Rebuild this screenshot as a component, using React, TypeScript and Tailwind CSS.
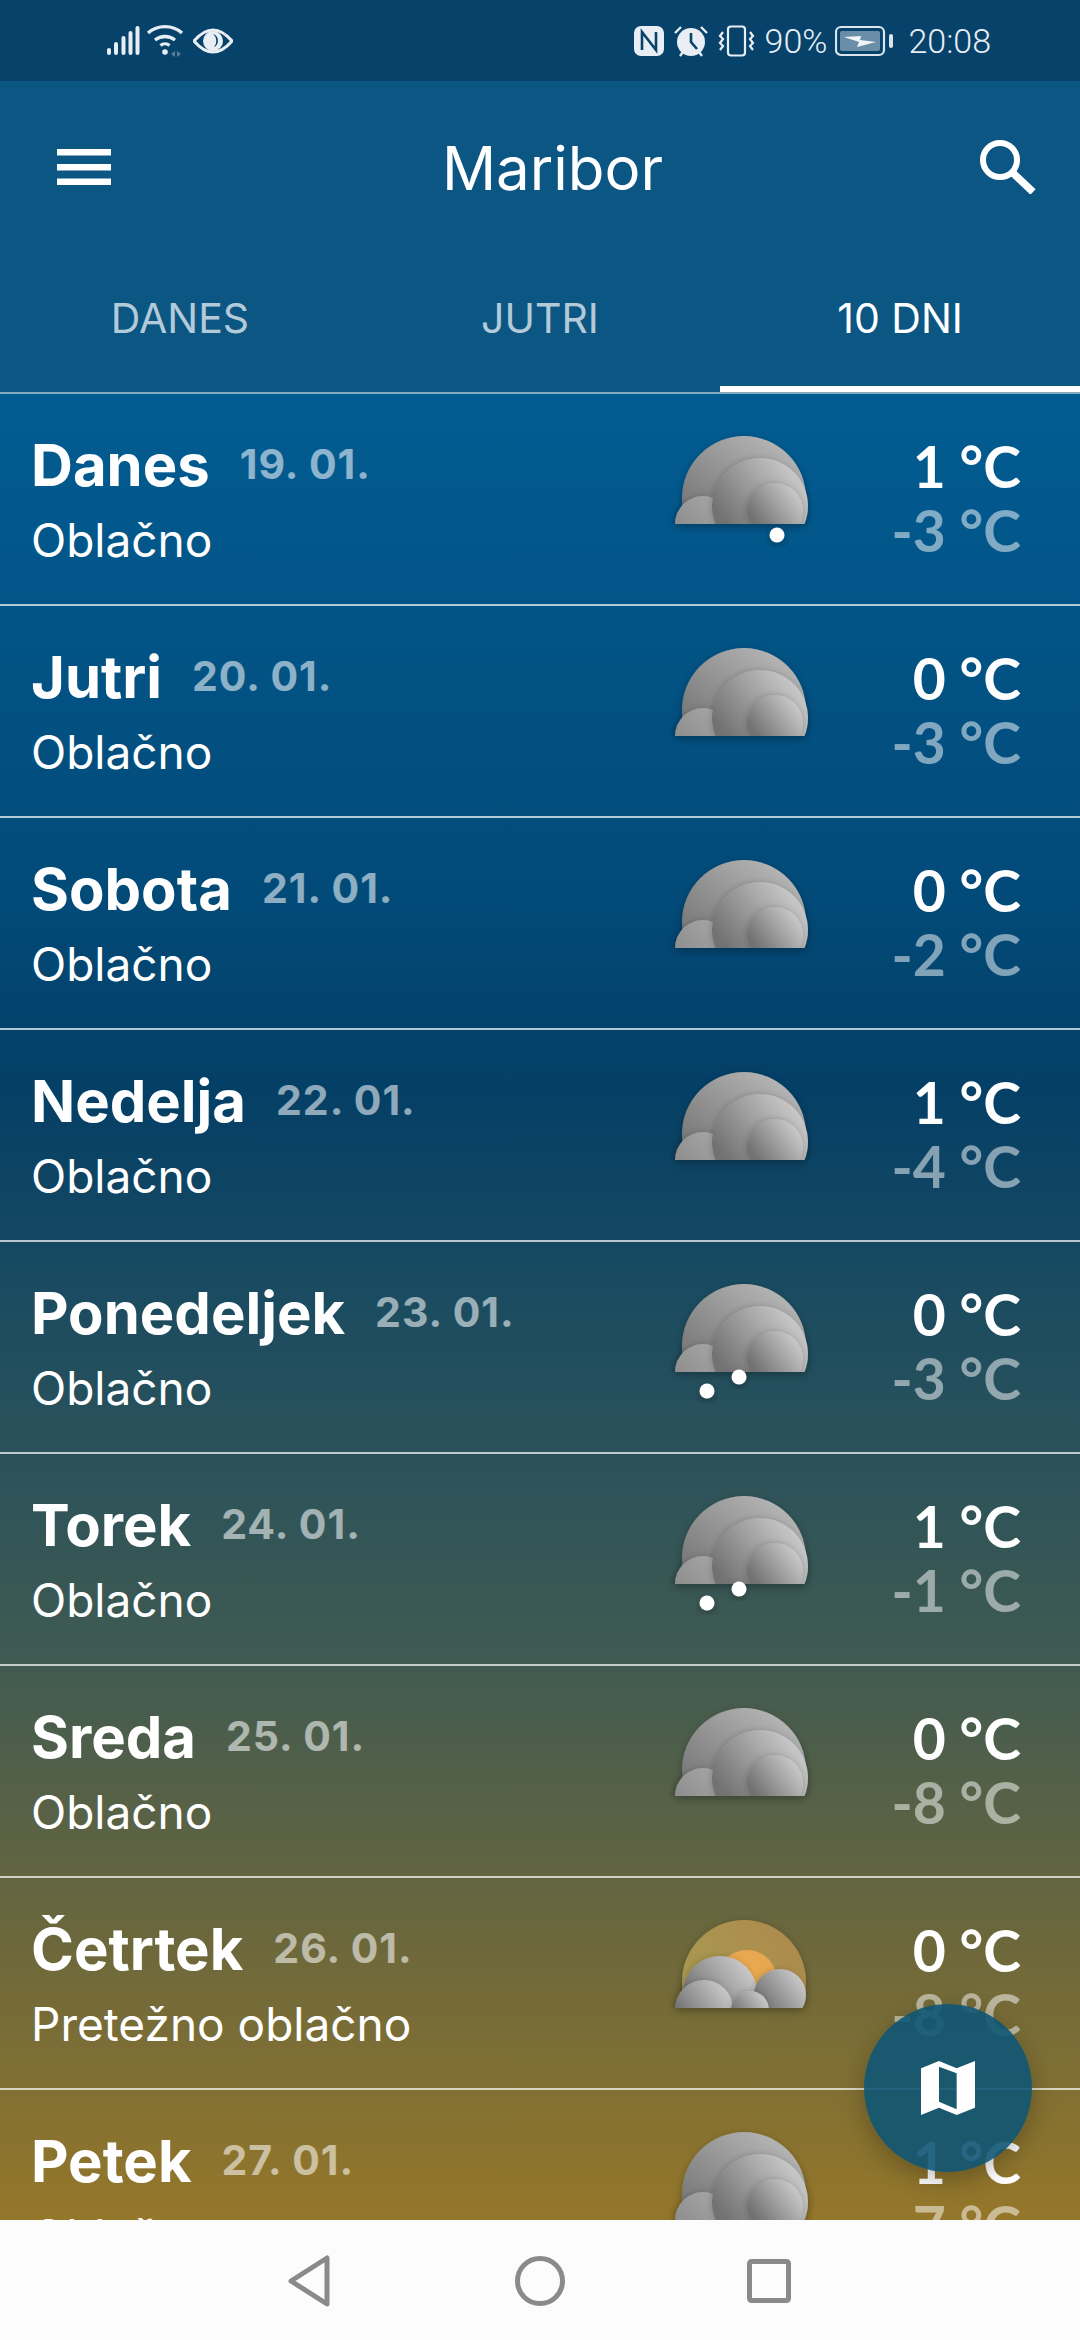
const days = [
  { name: 'Danes', date: '19. 01.', desc: 'Oblačno', hi: '1 °C', lo: '-3 °C', icon: 'one' },
  { name: 'Jutri', date: '20. 01.', desc: 'Oblačno', hi: '0 °C', lo: '-3 °C', icon: 'cloud' },
  { name: 'Sobota', date: '21. 01.', desc: 'Oblačno', hi: '0 °C', lo: '-2 °C', icon: 'cloud' },
  { name: 'Nedelja', date: '22. 01.', desc: 'Oblačno', hi: '1 °C', lo: '-4 °C', icon: 'cloud' },
  { name: 'Ponedeljek', date: '23. 01.', desc: 'Oblačno', hi: '0 °C', lo: '-3 °C', icon: 'two' },
  { name: 'Torek', date: '24. 01.', desc: 'Oblačno', hi: '1 °C', lo: '-1 °C', icon: 'two' },
  { name: 'Sreda', date: '25. 01.', desc: 'Oblačno', hi: '0 °C', lo: '-8 °C', icon: 'cloud' },
  { name: 'Četrtek', date: '26. 01.', desc: 'Pretežno oblačno', hi: '0 °C', lo: '-8 °C', icon: 'sun' },
  { name: 'Petek', date: '27. 01.', desc: 'Oblačno', hi: '1 °C', lo: '-7 °C', icon: 'cloud' },
];

function IconDefs() {
  return (
    <svg width="0" height="0" className="absolute">
      <defs>
        <linearGradient id="gBig" x1="0.1" y1="0.7" x2="0.7" y2="0">
          <stop offset="0" stopColor="#757575" />
          <stop offset="1" stopColor="#b4b4b4" />
        </linearGradient>
        <linearGradient id="gMid" x1="0.1" y1="0.62" x2="0.8" y2="0.1">
          <stop offset="0" stopColor="#727272" />
          <stop offset="1" stopColor="#c6c6c6" />
        </linearGradient>
        <linearGradient id="gFoot" x1="0.1" y1="0.7" x2="0.8" y2="0.1">
          <stop offset="0" stopColor="#8c8c8c" />
          <stop offset="1" stopColor="#a6a6a6" />
        </linearGradient>
        <linearGradient id="gHalo" x1="0" y1="0.6" x2="0.8" y2="0.1">
          <stop offset="0" stopColor="#a89a50" />
          <stop offset="1" stopColor="#ad8c4e" />
        </linearGradient>
        <clipPath id="cutBase">
          <rect x="0" y="0" width="150" height="129" />
        </clipPath>
        <filter id="soft" x="-30%" y="-30%" width="160%" height="160%">
          <feDropShadow dx="-1" dy="0" stdDeviation="3" floodColor="#000000" floodOpacity="0.18" />
        </filter>
        <filter id="under" x="-20%" y="-20%" width="140%" height="150%">
          <feDropShadow dx="0" dy="3" stdDeviation="4" floodColor="#000000" floodOpacity="0.3" />
        </filter>
      </defs>
    </svg>
  );
}

function WeatherIcon({ kind }: { kind: string }) {
  return (
    <svg width="150" height="170" viewBox="0 0 150 170" className="mt-[1px]">
      {kind === 'sun' ? (
        <g filter="url(#under)">
          <g clipPath="url(#cutBase)">
            <circle cx="79" cy="103" r="62" fill="url(#gHalo)" />
            <circle cx="82" cy="101" r="30" fill="#e8a850" />
            <circle cx="55" cy="114" r="37" fill="url(#gMid)" filter="url(#soft)" />
            <circle cx="115" cy="116" r="26" fill="url(#gMid)" filter="url(#soft)" />
            <circle cx="39" cy="130" r="29" fill="url(#gMid)" filter="url(#soft)" />
            <circle cx="85" cy="131" r="19" fill="url(#gMid)" filter="url(#soft)" />
          </g>
        </g>
      ) : (
        <g filter="url(#under)">
          <g clipPath="url(#cutBase)">
            <circle cx="79" cy="103" r="62" fill="url(#gBig)" />
            <circle cx="38" cy="129" r="28" fill="url(#gFoot)" filter="url(#soft)" />
            <circle cx="95" cy="111" r="48" fill="url(#gMid)" filter="url(#soft)" />
            <circle cx="110" cy="116" r="28" fill="url(#gMid)" filter="url(#soft)" />
          </g>
        </g>
      )}
      {kind === 'one' && <circle cx="112" cy="140" r="7.5" fill="#ffffff" filter="url(#under)" />}
      {kind === 'two' && (
        <>
          <circle cx="74" cy="134" r="7.5" fill="#ffffff" filter="url(#under)" />
          <circle cx="42" cy="148" r="7.5" fill="#ffffff" filter="url(#under)" />
        </>
      )}
    </svg>
  );
}

function StatusBar() {
  return (
    <div className="h-[81px] shrink-0 bg-[#07426a] flex items-center text-[#e8eef3] font-['Roboto',sans-serif] font-light text-[34px]">
      <div className="ml-[106px] flex items-center">
        {/* signal */}
        <svg width="34" height="32" viewBox="0 0 34 32" fill="#e8eef3">
          <rect x="1" y="23" width="4" height="7" rx="2" />
          <rect x="8" y="17" width="4" height="13" rx="2" />
          <rect x="15.5" y="11" width="4" height="19" rx="2" />
          <rect x="22.5" y="6" width="4" height="24" rx="2" />
          <rect x="29.5" y="1" width="4" height="29" rx="2" />
        </svg>
        {/* wifi */}
        <svg width="40" height="34" viewBox="0 0 40 34" fill="none" stroke="#e8eef3" strokeWidth="3.4" className="ml-[6px]">
          <path d="M2 9 A26 26 0 0 1 36 9" />
          <path d="M9 16 A16 16 0 0 1 29 16" />
          <circle cx="19" cy="28" r="2.8" fill="#e8eef3" stroke="none" />
          <path d="M14.5 21.5 A7 7 0 0 1 23.5 21.5" />
          <path d="M29 27 L25 30 L29 33 Z M31 27 L35 30 L31 33 Z" fill="#5a7f98" stroke="none" />
        </svg>
        {/* eye */}
        <svg width="40" height="30" viewBox="0 0 40 30" className="ml-[7px]">
          <path d="M1 15 Q20 -7 39 15 Q20 37 1 15 Z" fill="none" stroke="#e8eef3" strokeWidth="3" />
          <circle cx="20" cy="15" r="10" fill="#e8eef3" />
          <path d="M20 8 A7 7 0 0 1 21 21 A9 9 0 0 0 20 8 Z" fill="#07426a" />
        </svg>
      </div>
      <div className="ml-auto mr-[89px] flex items-center">
        {/* nfc */}
        <svg width="30" height="32" viewBox="0 0 30 32">
          <rect x="0" y="1" width="30" height="30" rx="7" fill="#e8eef3" />
          <path d="M8 25 V7 L22 25 V7" fill="none" stroke="#07426a" strokeWidth="2.6" />
        </svg>
        {/* alarm */}
        <svg width="34" height="34" viewBox="0 0 34 34" className="ml-[10px]">
          <circle cx="17" cy="18" r="14" fill="#e8eef3" />
          <path d="M17 9 V18 L23 25" fill="none" stroke="#07426a" strokeWidth="2.6" />
          <path d="M1 9 L7 3 M33 9 L27 3 M6 32 L9 28 M28 32 L25 28" stroke="#e8eef3" strokeWidth="2.4" />
        </svg>
        {/* vibrate */}
        <svg width="38" height="32" viewBox="0 0 38 32" fill="none" stroke="#e8eef3" strokeWidth="2.2" className="ml-[10px]">
          <rect x="10" y="1.5" width="17" height="29" rx="3" />
          <path d="M5 7 L2 11 L5 14 L2 18 L5 21 L2 25" />
          <path d="M32 7 L35 11 L32 14 L35 18 L32 21 L35 25" />
        </svg>
        <span className="ml-[9px] leading-none">90%</span>
        {/* battery */}
        <svg width="60" height="32" viewBox="0 0 60 32" className="ml-[8px]">
          <rect x="1" y="2" width="48" height="28" rx="5" fill="none" stroke="#dbe5ec" strokeWidth="2.2" />
          <rect x="5" y="6" width="40" height="20" rx="2" fill="#6a8ea8" />
          <path d="M9 12 L26 11 L25 15 L41 17 L22 22 L24 17 Z" fill="#f2f5f7" />
          <rect x="54" y="9" width="4" height="14" rx="2" fill="#dbe5ec" />
        </svg>
        <span className="ml-[13px] leading-none">20:08</span>
      </div>
    </div>
  );
}

function AppBar() {
  return (
    <div className="h-[313px] shrink-0 bg-[#0c5683] flex flex-col text-white font-['Inter',sans-serif] border-b-2 border-white/50">
      <div className="h-[172px] shrink-0 flex items-center justify-between pl-[57px] pr-[44px]">
        <svg width="54" height="36" viewBox="0 0 54 36" fill="#ffffff">
          <rect width="54" height="6.5" />
          <rect y="15" width="54" height="6.5" />
          <rect y="29.5" width="54" height="6.5" />
        </svg>
        <span className="text-[60px] leading-none pt-[2px] ml-[14px]">Maribor</span>
        <svg width="56" height="54" viewBox="0 0 56 54" fill="none" stroke="#ffffff">
          <circle cx="20" cy="20" r="17" strokeWidth="6" />
          <path d="M32 32 L53 52" strokeWidth="7.5" />
        </svg>
      </div>
      <div className="flex-1 flex text-[41px]">
        <div className="w-[360px] flex items-end justify-center pb-[53px] text-white/70 leading-none">DANES</div>
        <div className="w-[360px] flex items-end justify-center pb-[53px] text-white/70 leading-none">JUTRI</div>
        <div className="w-[360px] flex items-end justify-center pb-[47px] leading-none border-b-[6px] border-white">10 DNI</div>
      </div>
    </div>
  );
}

function DayRow({ day }: { day: (typeof days)[number] }) {
  return (
    <div className="h-[212px] shrink-0 flex border-b-2 border-white/70 text-white font-['Inter',sans-serif]">
      <div className="w-[665px] shrink-0 pl-[31px] pt-[37px]">
        <div className="flex items-start gap-[30px] h-[68px]">
          <span className="text-[58px] leading-[68px] font-bold">{day.name}</span>
          <span className="text-[41px] leading-[48px] mt-[9px] font-bold text-white/55 tracking-[1px]">{day.date}</span>
        </div>
        <div className="text-[46px] leading-[56px] mt-[13px]">{day.desc}</div>
      </div>
      <WeatherIcon kind={day.icon} />
      <div className="flex-1 pr-[59px] pt-[40px] text-right text-[57px] font-bold leading-[64px] font-['Lato',sans-serif]">
        <div>{day.hi}</div>
        <div className="text-white/50">{day.lo}</div>
      </div>
    </div>
  );
}

export default function App() {
  return (
    <div className="w-[1080px] h-[2340px] relative overflow-hidden flex flex-col bg-[#fcfcfc]">
      <IconDefs />
      <StatusBar />
      <AppBar />
      <div className="flex-1 min-h-0 overflow-hidden flex flex-col bg-[linear-gradient(180deg,#025c92_0%,#024a78_28%,#043f66_38%,#1c4c60_50%,#3f5a52_69%,#6a673d_84%,#95772a_100%)]">
        {days.map((d) => (
          <DayRow key={d.name} day={d} />
        ))}
      </div>
      <div className="h-[120px] shrink-0 bg-[#fcfcfc] flex items-center">
        <svg width="1080" height="120" viewBox="0 0 1080 120" fill="none" stroke="#8a8a8a" strokeWidth="5" strokeLinejoin="round">
          <path d="M327 38 L327 84 L291 61 Z" />
          <circle cx="540" cy="61" r="22.5" />
          <rect x="749.5" y="41.5" width="39" height="39" rx="2" />
        </svg>
      </div>
      <div className="absolute left-[864px] top-[2004px] w-[168px] h-[168px] rounded-full bg-[#0e5574]/90 shadow-[0_8px_24px_rgba(0,0,0,0.25)] flex items-center justify-center">
        <svg width="54" height="54" viewBox="843 543 162 162" fill="#ffffff" fillRule="evenodd">
          <path d="M843 565 L897 543 L950 565 L1005 543 L1005 683 L950 705 L897 683 L843 705 Z M897 560 L897 665 L950 688 L950 580 Z" />
        </svg>
      </div>
    </div>
  );
}
